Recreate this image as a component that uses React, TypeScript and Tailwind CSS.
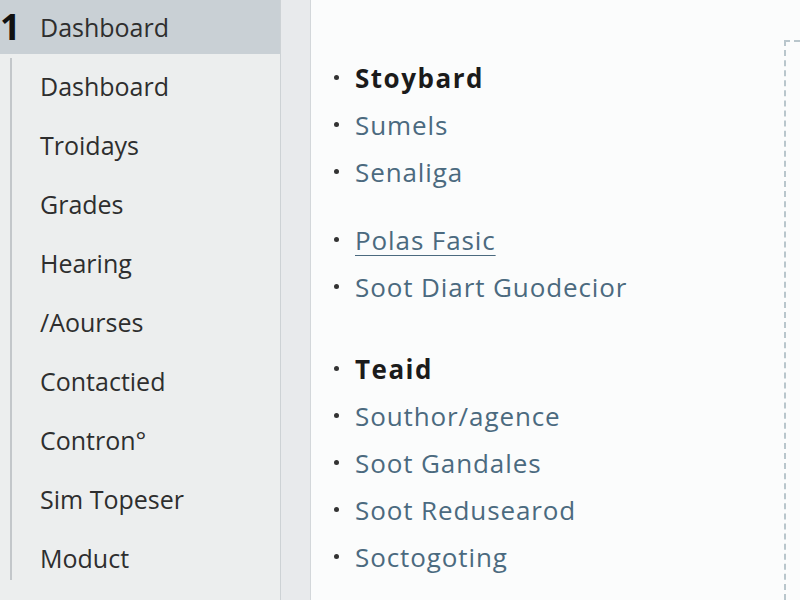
const NAV = [
  "Dashboard",
  "Troidays",
  "Grades",
  "Hearing",
  "/Aourses",
  "Contactied",
  "Contron°",
  "Sim Topeser",
  "Moduct",
];

type Item = { label: string; bold?: boolean; underline?: boolean };

const GROUPS: { gap: string; items: Item[] }[] = [
  {
    gap: "mt-0",
    items: [
      { label: "Stoybard", bold: true },
      { label: "Sumels" },
      { label: "Senaliga" },
    ],
  },
  {
    gap: "mt-[21px]",
    items: [{ label: "Polas Fasic", underline: true }, { label: "Soot Diart Guodecior" }],
  },
  {
    gap: "mt-[35px]",
    items: [
      { label: "Teaid", bold: true },
      { label: "Southor/agence" },
      { label: "Soot Gandales" },
      { label: "Soot Redusearod" },
      { label: "Soctogoting" },
    ],
  },
];

export default function App() {
  return (
    <div className="flex h-[600px] w-[800px] overflow-hidden bg-white font-['Open_Sans',sans-serif]">
      {/* Sidebar */}
      <aside className="flex w-[281px] shrink-0 flex-col border-r border-[#cdd2d5] bg-[#eceeee] text-[#2e2e2e]">
        <div className="flex h-[54px] items-center bg-[#c9d0d5]">
          <span className="w-[40px] text-[36px] font-bold leading-none tracking-tighter text-[#111]">1</span>
          <span className="text-[25px] leading-none">Dashboard</span>
        </div>
        <div className="flex flex-1">
          <div className="mb-[20px] ml-[10px] mt-[4px] w-[2px] bg-[#c3c7ca]" />
          <ul className="flex flex-col pl-[28px] pt-[3px]">
            {NAV.map((n) => (
              <li key={n} className="flex h-[59px] items-center text-[25px] leading-none">
                {n}
              </li>
            ))}
          </ul>
        </div>
      </aside>

      {/* Gutter strip */}
      <div className="w-[30px] shrink-0 border-r border-[#d3d7da] bg-[#e8eaec]" />

      {/* Content */}
      <main className="flex flex-1 bg-[#fbfcfc]">
        <div className="flex-1 pl-[23px] pt-[54px]">
          {GROUPS.map((g, gi) => (
            <ul key={gi} className={g.gap}>
              {g.items.map((it) => (
                <li key={it.label} className="flex h-[47px] items-center">
                  <span className="mr-[16px] h-[5px] w-[5px] rounded-full bg-[#333]" />
                  <span
                    className={
                      it.bold
                        ? "text-[26px] font-bold leading-none tracking-[1.5px] text-[#1b1b1b]"
                        : it.underline
                          ? "text-[26px] leading-none tracking-[0.9px] text-[#4b6a7f] underline decoration-1 underline-offset-[5px]"
                          : "text-[26px] leading-none tracking-[0.9px] text-[#4b6a7f]"
                    }
                  >
                    {it.label}
                  </span>
                </li>
              ))}
            </ul>
          ))}
        </div>
        <div className="mr-[-10px] mt-[40px] w-[26px] border-l-2 border-t-2 border-dashed border-[#b9c6cc]" />
      </main>
    </div>
  );
}
